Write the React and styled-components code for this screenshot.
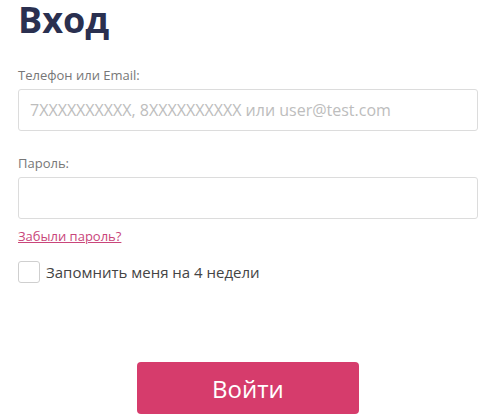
import React from 'react'
import styled, { createGlobalStyle } from 'styled-components'

const GlobalStyle = createGlobalStyle`
  body {
    margin: 0;
    background: #fff;
    font-family: "Open Sans", "Liberation Sans", sans-serif;
  }
`

const Form = styled.form`
  padding: 0 20px 0 18px;
  display: flex;
  flex-direction: column;
`

const Title = styled.h1`
  margin: 0;
  padding-top: 1px;
  font-size: 36px;
  line-height: 38px;
  font-weight: 700;
  color: #2a3050;
`

const Label = styled.label`
  margin-top: ${p => p.$top}px;
  font-size: 13px;
  line-height: 18px;
  color: #777;
`

const Input = styled.input`
  margin-top: 5px;
  box-sizing: border-box;
  height: 42px;
  width: 100%;
  border: 1px solid #dcdcdc;
  border-radius: 3px;
  padding: 0 11px;
  font-family: inherit;
  font-size: 16px;
  color: #333;
  outline: none;
  &::placeholder {
    color: #bdbdbd;
  }
`

const Forgot = styled.a`
  margin-top: 8px;
  align-self: flex-start;
  font-size: 13px;
  line-height: 18px;
  color: #c9457a;
  text-decoration: underline;
`

const Remember = styled.label`
  margin-top: 16px;
  display: flex;
  align-items: center;
  gap: 6px;
  font-size: 15px;
  line-height: 22px;
  color: #444;
`

const Box = styled.span`
  width: 22px;
  height: 22px;
  box-sizing: border-box;
  border: 1px solid #cfcfcf;
  border-radius: 3px;
`

const Submit = styled.button`
  margin: 79px auto 0;
  width: 222px;
  height: 52px;
  border: 0;
  border-radius: 4px;
  background: #d63c6c;
  color: #fff;
  font-family: inherit;
  font-size: 24px;
`

export default function App() {
  return (
    <>
      <GlobalStyle />
      <Form onSubmit={e => e.preventDefault()}>
        <Title>Вход</Title>
        <Label $top={27}>Телефон или Email:</Label>
        <Input placeholder="7XXXXXXXXXX, 8XXXXXXXXXX или user@test.com" />
        <Label $top={23}>Пароль:</Label>
        <Input type="password" />
        <Forgot href="#">Забыли пароль?</Forgot>
        <Remember>
          <Box />
          Запомнить меня на 4 недели
        </Remember>
        <Submit type="submit">Войти</Submit>
      </Form>
    </>
  )
}
